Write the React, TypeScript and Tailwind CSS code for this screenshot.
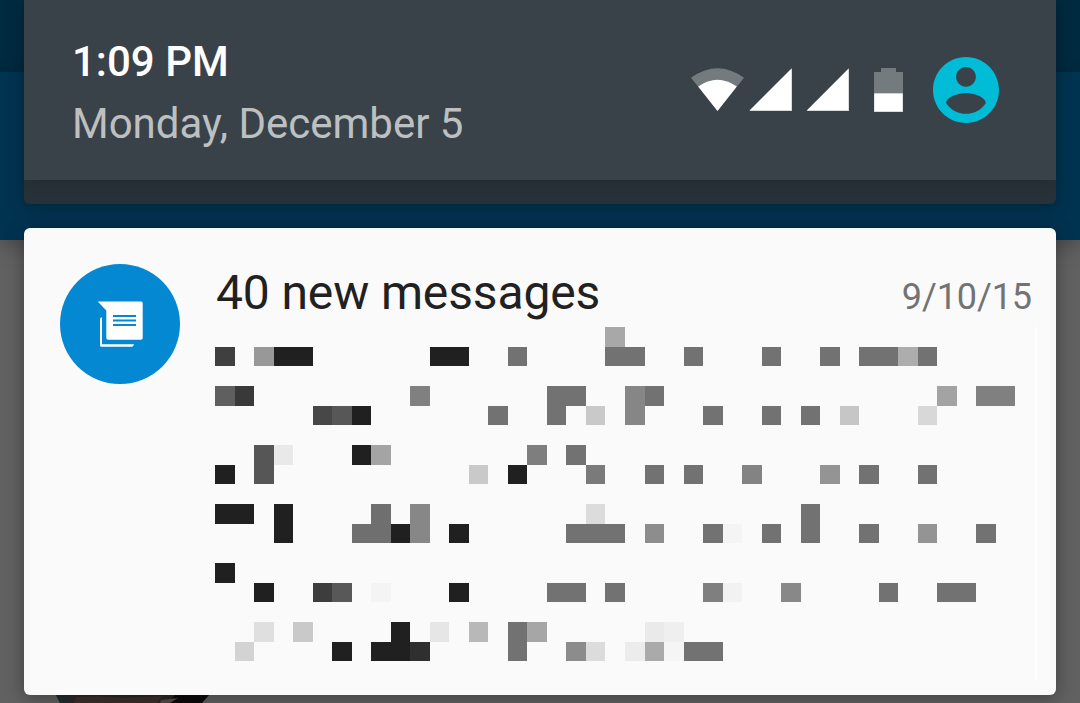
type Cell = [col: number, row: number, cols: number, rows: number, color: string];

const DARK = "#202020";
const MID = "#727272";

const cells: Cell[] = [
  [20, 0, 1, 1, "#a8a8a8"],
  [0, 1, 1, 1, "#3f3f3f"], [2, 1, 1, 1, "#989898"], [3, 1, 2, 1, DARK], [11, 1, 2, 1, DARK],
  [15, 1, 1, 1, MID], [20, 1, 2, 1, MID], [24, 1, 1, 1, MID], [28, 1, 1, 1, MID], [31, 1, 1, 1, MID],
  [33, 1, 2, 1, MID], [35, 1, 1, 1, "#adadad"], [36, 1, 1, 1, MID],
  [0, 3, 1, 1, "#5f5f5f"], [1, 3, 1, 1, "#393939"], [10, 3, 1, 1, "#808080"], [17, 3, 2, 1, MID],
  [21, 3, 1, 2, "#868686"], [22, 3, 1, 1, MID], [37, 3, 1, 1, "#a3a3a3"], [39, 3, 2, 1, "#808080"],
  [5, 4, 1, 1, "#474747"], [6, 4, 1, 1, "#575757"], [7, 4, 1, 1, DARK], [14, 4, 1, 1, MID],
  [17, 4, 1, 1, MID], [19, 4, 1, 1, "#c9c9c9"], [25, 4, 1, 1, MID], [28, 4, 1, 1, MID],
  [30, 4, 1, 1, MID], [32, 4, 1, 1, "#c6c6c6"], [36, 4, 1, 1, "#d8d8d8"],
  [2, 6, 1, 2, "#565656"], [3, 6, 1, 1, "#e9e9e9"], [7, 6, 1, 1, DARK], [8, 6, 1, 1, "#a4a4a4"],
  [16, 6, 1, 1, "#7e7e7e"], [18, 6, 1, 1, MID],
  [0, 7, 1, 1, DARK], [13, 7, 1, 1, "#c9c9c9"], [15, 7, 1, 1, DARK], [19, 7, 1, 1, "#7a7a7a"],
  [22, 7, 1, 1, MID], [24, 7, 1, 1, MID], [27, 7, 1, 1, "#838383"], [31, 7, 1, 1, "#949494"],
  [33, 7, 1, 1, MID], [36, 7, 1, 1, MID],
  [0, 9, 2, 1, DARK], [3, 9, 1, 2, DARK], [8, 9, 1, 2, "#6f6f6f"], [10, 9, 1, 2, "#878787"],
  [19, 9, 1, 1, "#dcdcdc"], [30, 9, 1, 2, MID],
  [7, 10, 1, 1, "#6f6f6f"], [9, 10, 1, 1, DARK], [12, 10, 1, 1, DARK], [18, 10, 3, 1, MID],
  [22, 10, 1, 1, "#8d8d8d"], [25, 10, 1, 1, MID], [26, 10, 1, 1, "#f4f4f4"], [28, 10, 1, 1, MID],
  [33, 10, 1, 1, MID], [36, 10, 1, 1, "#949494"], [39, 10, 1, 1, MID],
  [0, 12, 1, 1, DARK],
  [2, 13, 1, 1, DARK], [5, 13, 1, 1, "#3d3d3d"], [6, 13, 1, 1, "#585858"], [8, 13, 1, 1, "#f4f4f4"],
  [12, 13, 1, 1, DARK], [17, 13, 2, 1, MID], [20, 13, 1, 1, MID], [25, 13, 1, 1, "#7f7f7f"],
  [26, 13, 1, 1, "#f2f2f2"], [29, 13, 1, 1, "#888888"], [34, 13, 1, 1, MID], [37, 13, 2, 1, MID],
  [2, 15, 1, 1, "#dfdfdf"], [4, 15, 1, 1, "#c9c9c9"], [9, 15, 1, 1, DARK], [11, 15, 1, 1, "#e6e6e6"],
  [13, 15, 1, 1, "#b8b8b8"], [15, 15, 1, 2, MID], [16, 15, 1, 1, "#a6a6a6"], [22, 15, 1, 1, "#eaeaea"],
  [23, 15, 1, 1, "#efefef"],
  [1, 16, 1, 1, "#d3d3d3"], [6, 16, 1, 1, DARK], [8, 16, 2, 1, DARK], [10, 16, 1, 1, "#2f2f2f"],
  [18, 16, 1, 1, "#8c8c8c"], [19, 16, 1, 1, "#dcdcdc"], [21, 16, 1, 1, "#ececec"],
  [22, 16, 1, 1, "#aaaaaa"], [23, 16, 1, 1, "#f5f5f5"], [24, 16, 2, 1, MID],
];

function RedactedText() {
  return (
    <div className="grid h-[352px] w-[820px] shrink-0 grid-cols-[repeat(41,19.515625px)] grid-rows-[repeat(17,19.6667px)] pl-[0.171875px]">
      {cells.map(([col, row, cols, rows, color]) => (
        <div
          key={`${col}-${row}`}
          style={{
            gridColumn: `${col + 1} / span ${cols}`,
            gridRow: `${row + 1} / span ${rows}`,
            backgroundColor: color,
          }}
        />
      ))}
    </div>
  );
}

function StatusIcons() {
  return (
    <svg className="block h-[46px] w-[214px]" viewBox="690 67 214 46" aria-hidden="true">
      <path d="M691 77.7Q717.5 58.700 744 77.700L717.500 111Z" fill="#737b7e" />
      <path d="M698.200 86.400Q717.500 73.200 736.800 86.400L717.500 111Z" fill="#fff" />
      <path d="M749.300 111L792 68.300V111ZM806.500 111L849 68.300V111Z" fill="#c9cccd" />
      <path d="M749.800 110.300L791.300 68.800V110.300ZM807 110.300L848.300 69V110.300Z" fill="#fff" />
      <path d="M881 68H896V72H903V94H874V72H881Z" fill="#737b7e" />
      <path d="M874 93.300H903V112H874Z" fill="#c9cccd" />
      <path d="M874.500 93.600H902.400V111.300H874.500Z" fill="#fff" />
    </svg>
  );
}

function UserIcon() {
  return (
    <svg className="block size-[66px]" viewBox="2 2 20 20" aria-hidden="true">
      <path
        fill="#00bcd7"
        d="M12 2C6.480 2 2 6.480 2 12s4.480 10 10 10 10-4.480 10-10S17.520 2 12 2zm0 3c1.660 0 3 1.340 3 3s-1.340 3-3 3-3-1.340-3-3 1.340-3 3-3zm0 14.200c-2.500 0-4.710-1.280-6-3.220.030-1.990 4-3.080 6-3.080s5.970 1.090 6 3.080c-1.290 1.940-3.500 3.220-6 3.220z"
      />
    </svg>
  );
}

function MessageIcon() {
  return (
    <svg className="block size-[120px]" viewBox="0 0 120 120" aria-hidden="true">
      <circle cx="60" cy="60" r="60" fill="#0388d1" />
      <path
        d="M37.700 37.600H81Q82.700 37.600 82.700 39.300V74Q82.700 75.800 81 75.800H48Q46.300 75.800 46.300 74V46.500Z"
        fill="#fff"
      />
      <path d="M53 52H76M53 56.500H76M53 61H76" stroke="#0388d1" strokeWidth="2" />
      <path d="M40 55Q40 53.200 42 53.200V80.300H74Q73.500 82.700 72 82.700H41.500Q40 82.700 40 81.200Z" fill="#fff" />
    </svg>
  );
}

function Backdrop() {
  return (
    <div className="absolute inset-0 flex flex-col bg-[#616161]">
      <div className="h-[72px] bg-[#002a40]" />
      <div className="h-[168px] bg-[#003350] shadow-[0_6px_18px_rgba(0,0,0,0.25)]" />
      <svg className="mt-auto ml-[48px] block h-[10px] w-[170px]" viewBox="0 0 170 10" aria-hidden="true">
        <path d="M7 0H161L154 10H12Z" fill="#2e2727" />
        <path d="M7 0H24L20 10H12Z" fill="#242c2e" />
        <path d="M28 4L48 3L72 5L115 3L108 10H26Z" fill="#3d302e" />
        <path d="M127 2H161L154 10H120Z" fill="#0d0a0b" />
        <path d="M113 7L130 5L122 10H112Z" fill="#554b49" />
      </svg>
    </div>
  );
}

export default function App() {
  return (
    <div className="relative h-[703px] w-[1080px] overflow-hidden font-['Roboto',sans-serif]">
      <Backdrop />
      <div className="relative flex flex-col gap-6 px-6">
        <header className="flex h-[204px] flex-col overflow-hidden rounded-b-[6px] bg-[#273238] shadow-[0_2px_16px_rgba(0,0,0,0.3)]">
          <div className="flex h-[180px] items-start justify-between bg-[#3a4249] pr-[57px] pl-[48px] shadow-[0_2px_12px_rgba(0,0,0,0.18)]">
            <div className="pt-[31px] text-[42px] whitespace-nowrap">
              <div className="h-[62px] leading-[62px] font-medium text-white">1:09 PM</div>
              <div className="h-[62px] leading-[62px] text-[#bdc0c1]">Monday, December 5</div>
            </div>
            <div className="flex items-center gap-[29px] pt-[57px]">
              <StatusIcons />
              <UserIcon />
            </div>
          </div>
        </header>
        <main className="flex h-[467px] rounded-[6px] bg-[#fafafa] pt-[36px] pl-[36px] shadow-[0_3px_18px_rgba(0,0,0,0.35)]">
          <MessageIcon />
          <div className="ml-[35px] flex flex-col">
            <div className="flex h-[63px] w-[817px] items-start justify-between pl-px whitespace-nowrap">
              <h1 className="text-[48px] leading-[58px] tracking-[-0.13px] text-[#212121]">40 new messages</h1>
              <time className="pt-[3px] text-[36px] leading-[60px] tracking-[-0.1px] text-[#737373]">9/10/15</time>
            </div>
            <div className="flex">
              <RedactedText />
              <div className="h-[352px] w-[2px] bg-white" />
            </div>
          </div>
        </main>
      </div>
    </div>
  );
}
